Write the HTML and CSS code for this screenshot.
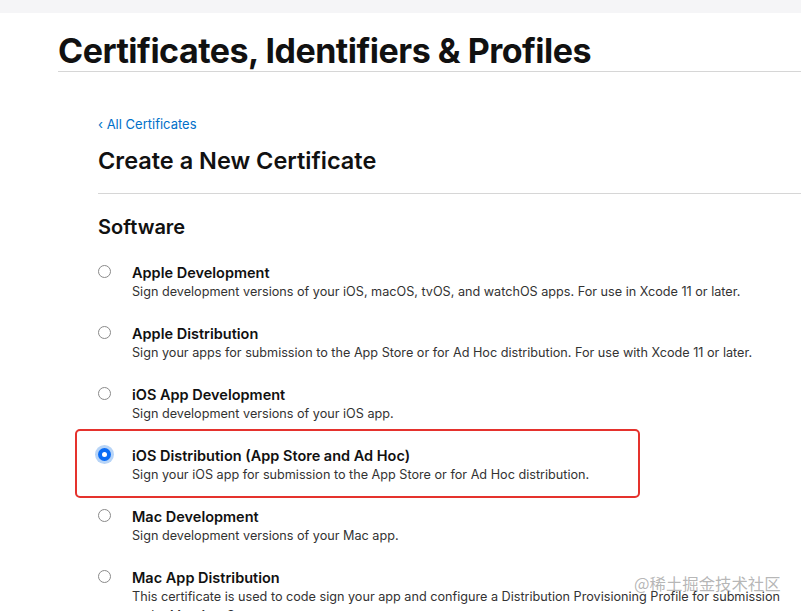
FILE: index.html
```
<!DOCTYPE html>
<html lang="en">

<head>
    <meta charset="UTF-8">
    <meta name="viewport" content="width=device-width, initial-scale=1.0">
    <title>Certificates, Identifiers &amp; Profiles</title>
    <link rel="stylesheet" href="styles.css">
</head>

<body>
    <div class="topbar"></div>

    <div class="header">
        <h1>Certificates, Identifiers &amp; Profiles</h1>
    </div>

    <div class="content">
        <a class="back" href="#">&#8249; All Certificates</a>
        <h2>Create a New Certificate</h2>

        <div class="section">
            <h3>Software</h3>

            <!-- Certificate types -->
            <div class="option">
                <span class="radio"></span>
                <div class="text">
                    <div class="title">Apple Development</div>
                    <div class="desc">Sign development versions of your iOS, macOS, tvOS, and watchOS apps. For use in Xcode 11 or later.</div>
                </div>
            </div>

            <div class="option">
                <span class="radio"></span>
                <div class="text">
                    <div class="title">Apple Distribution</div>
                    <div class="desc">Sign your apps for submission to the App Store or for Ad Hoc distribution. For use with Xcode 11 or later.</div>
                </div>
            </div>

            <div class="option">
                <span class="radio"></span>
                <div class="text">
                    <div class="title">iOS App Development</div>
                    <div class="desc">Sign development versions of your iOS app.</div>
                </div>
            </div>

            <div class="option selected">
                <span class="radio"><span class="dot"></span></span>
                <div class="text">
                    <div class="title">iOS Distribution (App Store and Ad Hoc)</div>
                    <div class="desc">Sign your iOS app for submission to the App Store or for Ad Hoc distribution.</div>
                </div>
            </div>

            <div class="option">
                <span class="radio"></span>
                <div class="text">
                    <div class="title">Mac Development</div>
                    <div class="desc">Sign development versions of your Mac app.</div>
                </div>
            </div>

            <div class="option">
                <span class="radio"></span>
                <div class="text">
                    <div class="title">Mac App Distribution</div>
                    <div class="desc">This certificate is used to code sign your app and configure a Distribution Provisioning Profile for submission to the Mac App Store.</div>
                </div>
            </div>
        </div>
    </div>

    <div class="watermark">@稀土掘金技术社区</div>
</body>

</html>
```

FILE: styles.css
```
html, body {
    height: 100%;
}

body {
    font-family: "Inter", "Liberation Sans", "Noto Sans CJK SC", sans-serif;
    margin: 0;
    padding: 0;
    background: #fff;
    color: #1d1d1f;
    overflow: hidden;
    position: relative;
}

.topbar {
    height: 13px;
    background: #f5f5f7;
}

.header {
    margin-left: 58px;
    border-bottom: 1px solid #d6d6d6;
}

.header h1 {
    margin: 0;
    padding: 18px 0 0;
    font-size: 34px;
    font-weight: 700;
    letter-spacing: -0.5px;
    color: #111;
    line-height: 40px;
}

.content {
    margin-left: 98px;
    padding-top: 44px;
}

.back {
    display: block;
    font-size: 13px;
    color: #0070c9;
    text-decoration: none;
    line-height: 16px;
}

.content h2 {
    margin: 0;
    padding: 14px 0 17px;
    font-size: 23.5px;
    font-weight: 600;
    line-height: 30px;
    color: #111;
    border-bottom: 1px solid #d6d6d6;
}

.section h3 {
    margin: 0;
    padding: 21px 0 24px;
    font-size: 20px;
    font-weight: 600;
    line-height: 24px;
    color: #111;
}

.option {
    display: flex;
    align-items: flex-start;
    height: 61px;
    position: relative;
}

.option .radio {
    width: 13px;
    height: 13px;
    border: 1px solid #8a8a8a;
    border-radius: 50%;
    box-sizing: border-box;
    margin: 2px 21px 0 0;
    flex-shrink: 0;
    display: flex;
    align-items: center;
    justify-content: center;
    background: #fff;
}

.option .title {
    font-size: 14.5px;
    font-weight: 600;
    line-height: 19px;
    color: #111;
}

.option .desc {
    font-size: 12.65px;
    line-height: 19px;
    color: #333;
    width: 650px;
}

.option.selected::before {
    content: "";
    position: absolute;
    left: -23px;
    top: -17px;
    width: 561px;
    height: 65px;
    border: 2px solid #e5322d;
    border-radius: 5px;
}

.option.selected .radio {
    border: none;
    background: #0a6cf5;
    box-shadow: 0 0 0 3px #b7d4f7;
}

.option.selected .dot {
    width: 5px;
    height: 5px;
    border-radius: 50%;
    background: #fff;
}

.watermark {
    position: absolute;
    left: 634px;
    top: 571px;
    font-size: 16.4px;
    color: rgba(120, 120, 120, 0.55);
    font-family: "Noto Sans CJK SC", sans-serif;
}
```
